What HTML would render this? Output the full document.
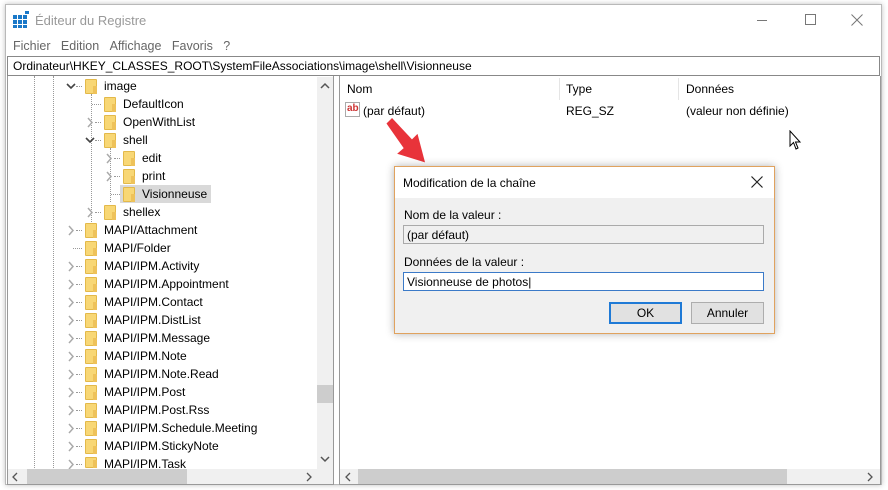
<!DOCTYPE html>
<html><head><meta charset="utf-8"><style>
*{margin:0;padding:0;box-sizing:border-box}
body{width:888px;height:490px;background:#fff;font-family:"Liberation Sans",sans-serif;font-size:12px;color:#000;position:relative;overflow:hidden}
.abs{position:absolute}
.win{left:5px;top:4px;width:877px;height:481px;border:1px solid #b9b9b9;background:#fff;box-shadow:0 0 5px rgba(0,0,0,.25)}
.row{position:absolute;height:18px;line-height:18px;white-space:nowrap}
.fold{position:absolute;width:12px;height:15px;background:#f8d775;border:1px solid #e3b94a;border-radius:1px}
.fold:after{content:"";position:absolute;right:-1px;bottom:-1px;width:4px;height:8px;background:#eec25a}
.chev{position:absolute}
.dl{position:absolute;border-left:1px dotted #999}
.dh{position:absolute;border-top:1px dotted #999;width:6px}
</style></head><body>
<div class="abs win"></div>
<svg class="abs" style="left:13px;top:11px" width="17" height="17"><g fill="#1a78c8"><rect x="0" y="4" width="4" height="4"/><rect x="5" y="4" width="4" height="4"/><rect x="10" y="4" width="4" height="4"/><rect x="0" y="9" width="4" height="4"/><rect x="5" y="9" width="4" height="4"/><rect x="10" y="9" width="4" height="4"/><rect x="0" y="14" width="4" height="3"/><rect x="5" y="14" width="4" height="3"/><rect x="10" y="14" width="4" height="3"/><rect x="12" y="0" width="4" height="3"/></g></svg>
<div class="abs" style="left:35px;top:13px;font-size:13px;color:#999">Éditeur du Registre</div>
<div class="abs" style="left:757px;top:20px;width:10px;border-top:1px solid #777"></div>
<div class="abs" style="left:805px;top:14px;width:11px;height:11px;border:1px solid #777"></div>
<svg class="abs" style="left:851px;top:14px" width="12" height="12"><path d="M0.5 0.5 L11.5 11.5 M11.5 0.5 L0.5 11.5" stroke="#777" stroke-width="1"/></svg>
<div class="abs" style="left:13px;top:39px;font-size:12.5px;color:#666">Fichier&nbsp;&nbsp;&nbsp;Edition&nbsp;&nbsp;&nbsp;Affichage&nbsp;&nbsp;&nbsp;Favoris&nbsp;&nbsp;&nbsp;?</div>
<div class="abs" style="left:7px;top:56px;width:873px;height:20px;border:1px solid #888;background:#fff;padding:2px 0 0 5px">Ordinateur\HKEY_CLASSES_ROOT\SystemFileAssociations\image\shell\Visionneuse</div>
<div class="abs" style="left:7px;top:76px;width:327px;height:409px;border:1px solid #999;border-top:none;overflow:hidden">
<div class="dl" style="left:26px;top:0;height:400px"></div>
<div class="dl" style="left:45px;top:0;height:400px"></div>
<div class="dl" style="left:83px;top:18px;height:144px"></div>
<div class="dl" style="left:102px;top:72px;height:54px"></div>
</div>
<div id="tree" class="abs" style="left:0;top:0"></div>
<div class="abs" style="left:317px;top:77px;width:16px;height:392px;background:#f0f0f0"></div>
<div class="abs" style="left:317px;top:385px;width:16px;height:18px;background:#cdcdcd"></div>
<svg class="abs" style="left:320px;top:82px" width="10" height="8"><path d="M1 6 L5 2 L9 6" fill="none" stroke="#555" stroke-width="1.5"/></svg>
<svg class="abs" style="left:320px;top:455px" width="10" height="8"><path d="M1 2 L5 6 L9 2" fill="none" stroke="#555" stroke-width="1.5"/></svg>
<div class="abs" style="left:8px;top:469px;width:325px;height:15px;background:#f0f0f0"></div>
<div class="abs" style="left:27px;top:469px;width:160px;height:15px;background:#cdcdcd"></div>
<svg class="abs" style="left:11px;top:472px" width="8" height="10"><path d="M6 1 L2 5 L6 9" fill="none" stroke="#555" stroke-width="1.3"/></svg>
<svg class="abs" style="left:305px;top:472px" width="8" height="10"><path d="M2 1 L6 5 L2 9" fill="none" stroke="#555" stroke-width="1.3"/></svg>
<div class="abs" style="left:339px;top:76px;width:542px;height:409px;border:1px solid #999;border-top:none"></div>
<div class="abs" style="left:347px;top:82px">Nom</div>
<div class="abs" style="left:559px;top:78px;height:22px;border-left:1px solid #e5e5e5"></div>
<div class="abs" style="left:566px;top:82px">Type</div>
<div class="abs" style="left:678px;top:78px;height:22px;border-left:1px solid #e5e5e5"></div>
<div class="abs" style="left:686px;top:82px">Données</div>
<div class="abs" style="left:345px;top:102px;width:15px;height:15px;border:1px solid #aaa;background:#fff;color:#c33;font-size:10px;font-weight:bold;line-height:12px;padding-left:1px">ab</div>
<div class="abs" style="left:363px;top:104px">(par défaut)</div>
<div class="abs" style="left:566px;top:104px">REG_SZ</div>
<div class="abs" style="left:686px;top:104px">(valeur non définie)</div>
<svg class="abs" style="left:789px;top:130px" width="14" height="22"><path d="M1 1 L1 16 L4.5 12.5 L7 19 L9 18 L6.5 12 L11 12 Z" fill="#fff" stroke="#000" stroke-width="1"/></svg>
<div class="abs" style="left:340px;top:469px;width:540px;height:15px;background:#f0f0f0"></div>
<div class="abs" style="left:358px;top:469px;width:429px;height:15px;background:#cdcdcd"></div>
<svg class="abs" style="left:344px;top:472px" width="8" height="10"><path d="M6 1 L2 5 L6 9" fill="none" stroke="#555" stroke-width="1.3"/></svg>
<svg class="abs" style="left:866px;top:472px" width="8" height="10"><path d="M2 1 L6 5 L2 9" fill="none" stroke="#555" stroke-width="1.3"/></svg>
<svg class="abs" style="left:380px;top:112px" width="60" height="60"><path d="M8 10 L14 5 L32 28 L38 23 L43 52 L16 41 L23 36 Z" fill="#e8333a" transform="rotate(-5 25 28)"/></svg>
<div class="abs" style="left:394px;top:166px;width:381px;height:168px;border:1px solid #e0a25e;background:#f0f0f0;box-shadow:0 0 8px rgba(0,0,0,.3)">
<div style="height:31px;background:#fff;padding:9px 0 0 8px">Modification de la chaîne</div>
<svg class="abs" style="left:356px;top:9px" width="12" height="12"><path d="M0.5 0.5 L11.5 11.5 M11.5 0.5 L0.5 11.5" stroke="#222" stroke-width="1.2"/></svg>
<div class="abs" style="left:9px;top:41px">Nom de la valeur :</div>
<div class="abs" style="left:8px;top:58px;width:361px;height:19px;border:1px solid #aaa;background:#f0f0f0;padding:2px 3px">(par défaut)</div>
<div class="abs" style="left:9px;top:88px">Données de la valeur :</div>
<div class="abs" style="left:8px;top:105px;width:361px;height:19px;border:1px solid #3b7ac8;background:#fff;padding:2px 3px">Visionneuse de photos|</div>
<div class="abs" style="left:214px;top:135px;width:73px;height:22px;border:2px solid #1f7ad6;background:#e1e1e1;text-align:center;line-height:18px">OK</div>
<div class="abs" style="left:296px;top:135px;width:73px;height:22px;border:1px solid #adadad;background:#e1e1e1;text-align:center;line-height:20px">Annuler</div>
</div>
<script>
var rows=[[0,"image","v"],[1,"DefaultIcon",""],[1,"OpenWithList",">"],[1,"shell","v"],[2,"edit",">"],[2,"print",">"],[2,"Visionneuse","s"],[1,"shellex",">"],
[0,"MAPI/Attachment",">"],[0,"MAPI/Folder",""],[0,"MAPI/IPM.Activity",">"],[0,"MAPI/IPM.Appointment",">"],[0,"MAPI/IPM.Contact",">"],[0,"MAPI/IPM.DistList",">"],[0,"MAPI/IPM.Message",">"],[0,"MAPI/IPM.Note",">"],[0,"MAPI/IPM.Note.Read",">"],[0,"MAPI/IPM.Post",">"],[0,"MAPI/IPM.Post.Rss",">"],[0,"MAPI/IPM.Schedule.Meeting",">"],[0,"MAPI/IPM.StickyNote",">"],[0,"MAPI/IPM.Task",">"]];
var h="";
rows.forEach(function(r,i){var y=77+i*18,fx=85+r[0]*19,tx=104+r[0]*19;
if(y>468)return;
var clip=y+18>468?"height:"+(468-y)+"px;overflow:hidden;":"";
if(r[2]=="v")h+='<svg class="chev" style="left:'+(fx-19)+'px;top:'+(y+6)+'px" width="10" height="7"><path d="M1 1 L5 5 L9 1" fill="none" stroke="#444" stroke-width="1.6"/></svg>';
else if(r[2]==">")h+='<svg class="chev" style="left:'+(fx-17)+'px;top:'+(y+4)+'px" width="7" height="11"><path d="M1 1 L5 5.5 L1 10" fill="none" stroke="#aaa" stroke-width="1.5"/></svg>';
h+='<div class="dh" style="left:'+(fx-9)+'px;top:'+(y+9)+'px;'+(r[2]==""||r[2]=="s"?'width:9px;left:'+(fx-12)+'px':'')+'"></div>';
if(r[2]=="s")h+='<div class="abs" style="left:'+(fx-3)+'px;top:'+y+'px;width:91px;height:18px;background:#d9d9d9"></div>';
h+='<div class="fold" style="left:'+fx+'px;top:'+(y+2)+'px;'+(y+17>468?'height:'+(468-y-2)+'px':'')+'"></div>';
h+='<div class="row" style="left:'+tx+'px;top:'+y+'px;'+clip+'">'+r[1]+'</div>';});
document.getElementById("tree").innerHTML=h;
</script>
</body></html>
